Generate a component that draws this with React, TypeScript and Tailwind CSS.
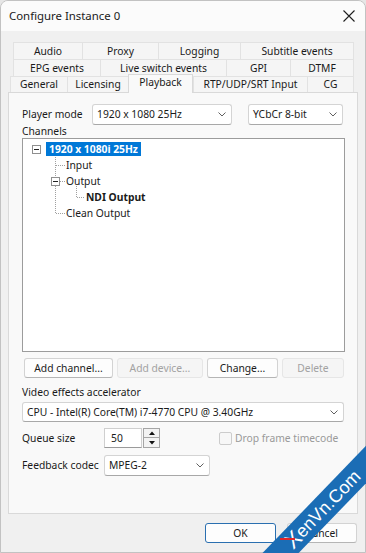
import React from "react";

function Chevron() {
  return (
    <svg width="8" height="5" viewBox="0 0 8 5" className="shrink-0">
      <polyline points="0.5,0.5 4,4 7.5,0.5" fill="none" stroke="#606060" strokeWidth="1" />
    </svg>
  );
}

function Combo({ text, className }: { text: string; className: string }) {
  return (
    <div
      className={
        "flex items-center justify-between bg-white border border-[#d4d4d4] border-b-[#a8a8a8] rounded-[3px] pl-[4px] pr-[5px] " +
        className
      }
    >
      <span className="whitespace-nowrap">{text}</span>
      <Chevron />
    </div>
  );
}

function Btn({ text, w, disabled }: { text: string; w: string; disabled?: boolean }) {
  return (
    <div
      className={
        "h-[20px] flex items-center justify-center rounded-[3px] border " +
        w +
        (disabled
          ? " bg-[#f5f5f5] border-[#e6e6e6] text-[#a2a2a2]"
          : " bg-[#fdfdfd] border-[#d3d3d3] border-b-[#b5b5b5] text-[#1a1a1a]")
      }
    >
      {text}
    </div>
  );
}

function Tab({ text, w, last }: { text: string; w: string; last?: boolean }) {
  return (
    <div
      className={
        "h-full flex items-center justify-center bg-[#f5f5f5] border-t border-l border-[#e2e2e2] whitespace-nowrap " +
        (last ? "border-r " : "") +
        w
      }
    >
      {text}
    </div>
  );
}

export default function App() {
  return (
    <div className="relative w-[366px] h-[553px] overflow-hidden bg-[#e6e6e6] font-['Noto_Sans',sans-serif] text-[10.3px] text-[#1a1a1a] leading-none">
      <div className="flex flex-col w-full h-full rounded-t-[8px] border border-[#c2c2c2] bg-[#f0f0f0] overflow-hidden">
        {/* Title bar */}
        <div className="h-[30px] shrink-0 bg-[#fbfbfb] flex items-center justify-between pl-[8px] pr-[10px]">
          <span className="text-[11.4px] text-[#1a1a1a]">Configure Instance 0</span>
          <svg width="12" height="12" viewBox="0 0 12 12">
            <path d="M0.5 0.5L11.5 11.5M11.5 0.5L0.5 11.5" stroke="#1f1f1f" strokeWidth="1.1" />
          </svg>
        </div>

        {/* Body */}
        <div className="flex-1 flex flex-col px-[7px] pt-[11px]">
          {/* Tabs */}
          <div className="flex flex-col">
            <div className="flex h-[17px] ml-[5px]">
              <Tab text="Audio" w="w-[69px]" />
              <Tab text="Proxy" w="w-[76px]" />
              <Tab text="Logging" w="w-[82px]" />
              <Tab text="Subtitle events" w="w-[114px]" last />
            </div>
            <div className="flex h-[17px] ml-[5px]">
              <Tab text="EPG events" w="w-[87px]" />
              <Tab text="Live switch events" w="w-[126px]" />
              <Tab text="GPI" w="w-[64px]" />
              <Tab text="DTMF" w="w-[64px]" last />
            </div>
            <div className="flex h-[16px] ml-[2px] items-end relative z-10">
              <Tab text="General" w="w-[57px]" />
              <Tab text="Licensing" w="w-[61px]" />
              <div className="h-[19px] -mb-[1px] w-[65px] flex items-center justify-center pb-[3px] bg-[#f9f9f9] border-t border-l border-r border-[#d9d9d9]">
                Playback
              </div>
              <Tab text="RTP/UDP/SRT Input" w="w-[114px]" />
              <Tab text="CG" w="w-[47px]" last />
            </div>
          </div>

          {/* Panel */}
          <div className="h-[422px] w-full border border-[#d9d9d9] bg-[#f9f9f9] flex flex-col pl-[13px]">
            <div className="mt-[11px] h-[21px] flex items-center">
              <span className="w-[70px]">Player mode</span>
              <Combo text="1920 x 1080 25Hz" className="w-[140px] h-[21px]" />
              <Combo text="YCbCr 8-bit" className="w-[95px] h-[21px] ml-[16px]" />
            </div>
            <div className="h-[13px] flex items-center">Channels</div>

            {/* Tree */}
            <div className="relative h-[214px] w-[323px] border border-[#9c9c9c] bg-white">
              <svg className="absolute left-0 top-0" width="200" height="90" viewBox="0 0 200 90">
                <g stroke="#a0a0a0" strokeWidth="1" strokeDasharray="1 1" fill="none">
                  <line x1="32.5" y1="18" x2="32.5" y2="38" />
                  <line x1="32.5" y1="47" x2="32.5" y2="75" />
                  <line x1="33" y1="26.5" x2="42" y2="26.5" />
                  <line x1="37" y1="42.5" x2="42" y2="42.5" />
                  <line x1="33" y1="74.5" x2="42" y2="74.5" />
                  <line x1="53.5" y1="47" x2="53.5" y2="58" />
                  <line x1="54" y1="58.5" x2="62" y2="58.5" />
                </g>
                <rect x="9.5" y="6.5" width="8" height="8" fill="white" stroke="#8f8f8f" />
                <line x1="11" y1="10.5" x2="16" y2="10.5" stroke="#222" />
                <rect x="28.5" y="38.5" width="8" height="8" fill="white" stroke="#8f8f8f" />
                <line x1="30" y1="42.5" x2="35" y2="42.5" stroke="#222" />
              </svg>
              <div className="relative flex flex-col pt-[2px]">
                <div className="h-[16px] flex items-center pl-[23px]">
                  <span className="h-[14px] flex items-center px-[3px] bg-[#0078d7] text-white font-bold">
                    1920 x 1080i 25Hz
                  </span>
                </div>
                <div className="h-[16px] flex items-center pl-[43px]">Input</div>
                <div className="h-[16px] flex items-center pl-[43px]">Output</div>
                <div className="h-[16px] flex items-center pl-[63px] font-bold">NDI Output</div>
                <div className="h-[16px] flex items-center pl-[43px]">Clean Output</div>
              </div>
            </div>

            <div className="mt-[6px] ml-[2px] flex gap-[4px]">
              <Btn text="Add channel..." w="w-[89px]" />
              <Btn text="Add device..." w="w-[86px]" disabled />
              <Btn text="Change..." w="w-[71px]" />
              <Btn text="Delete" w="w-[62px]" disabled />
            </div>

            <div className="mt-[7px] h-[14px] flex items-center">Video effects accelerator</div>
            <Combo
              text="CPU - Intel(R) Core(TM) i7-4770 CPU @ 3.40GHz"
              className="mt-[3px] w-[322px] h-[20px] pl-[3px] pr-[4px]"
            />

            <div className="mt-[6px] h-[20px] flex items-center">
              <span className="w-[82px]">Queue size</span>
              <div className="w-[38px] h-[20px] bg-white border border-[#cfcfcf] border-b-[#9a9a9a] flex items-center pl-[6px]">
                50
              </div>
              <div className="ml-[1px] w-[17px] h-[20px] flex flex-col">
                <div className="h-[10px] border border-[#a5a5a5] bg-[#f3f3f3] flex items-center justify-center">
                  <svg width="6" height="4" viewBox="0 0 6 4">
                    <polygon points="0,4 3,0.5 6,4" fill="#111" />
                  </svg>
                </div>
                <div className="h-[10px] border border-t-0 border-[#a5a5a5] bg-[#f3f3f3] flex items-center justify-center">
                  <svg width="6" height="4" viewBox="0 0 6 4">
                    <polygon points="0,0 6,0 3,3.5" fill="#111" />
                  </svg>
                </div>
              </div>
              <div className="ml-[59px] w-[13px] h-[13px] border border-[#cccccc] bg-[#f7f7f7] rounded-[2px]" />
              <span className="ml-[3px] text-[#9a9a9a]">Drop frame timecode</span>
            </div>

            <div className="mt-[7px] h-[21px] flex items-center">
              <span className="w-[82px]">Feedback codec</span>
              <Combo text="MPEG-2" className="w-[106px] h-[21px] pl-[3px]" />
            </div>
          </div>

          {/* Dialog buttons */}
          <div className="mt-[9px] mr-[1px] flex justify-end gap-[11px]">
            <div className="w-[71px] h-[20px] flex items-center justify-center rounded-[3px] bg-[#fdfdfd] border border-[#2a6fb0]">
              OK
            </div>
            <div className="w-[70px] h-[20px] flex items-center justify-center rounded-[3px] bg-[#fdfdfd] border border-[#d3d3d3] border-b-[#b5b5b5]">
              Cancel
            </div>
          </div>
        </div>
      </div>

      {/* Watermark */}
      <div className="absolute left-[200px] top-[494px] w-[250px] h-[26px] bg-[#1b6db5] rotate-[-46deg] flex items-center justify-start pl-[72px] text-white text-[18px] leading-none font-['Liberation_Sans',sans-serif]">
        <span className="text-[22px]">X</span>enVn.Com
      </div>
      <div className="absolute left-[280px] top-[538px] w-[15px] h-[2px] bg-[#e0262a]" />
    </div>
  );
}
